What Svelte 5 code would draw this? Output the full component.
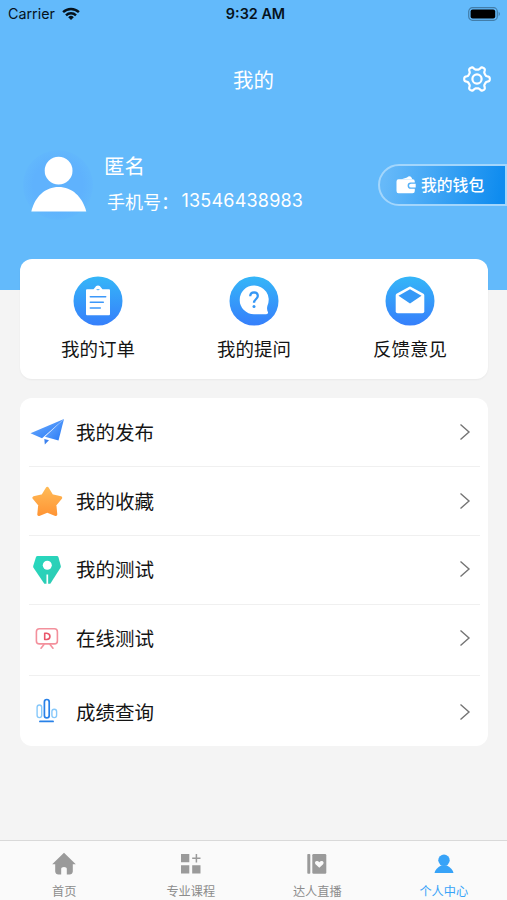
<script>
  // Six-lobed outline of the settings gear
  const gear = Array.from({ length: 120 }, (_, i) => {
    const a = (i * Math.PI) / 60;
    const b = a - 0.05 * Math.sin(6 * a);
    const r = 11 + 1.8 * Math.tanh(2.1 * (Math.cos(6 * a) + 0.15));
    return `${i ? 'L' : 'M'}${(15 + r * Math.cos(b)).toFixed(2)} ${(15 + r * Math.sin(b)).toFixed(2)}`;
  }).join('') + 'Z';

  const shortcuts = [
    { id: 'order', label: '我的订单' },
    { id: 'ask', label: '我的提问' },
    { id: 'mail', label: '反馈意见' }
  ];
  const rows = [
    { id: 'plane', label: '我的发布' },
    { id: 'star', label: '我的收藏' },
    { id: 'pen', label: '我的测试' },
    { id: 'board', label: '在线测试' },
    { id: 'bars', label: '成绩查询' }
  ];
  const tabs = [
    { id: 'home', label: '首页' },
    { id: 'grid', label: '专业课程' },
    { id: 'book', label: '达人直播' },
    { id: 'me', label: '个人中心' }
  ];
</script>

<div class="screen">
  <header>
    <div class="status">
      <div class="carrier">
        <span>Carrier</span>
        <svg width="18" height="14" viewBox="0 0 18 14">
          <g fill="none" stroke="#06121c" stroke-width="2.4">
            <path d="M1.1 5.2a11.2 11.2 0 0 1 15.800 0" />
            <path d="M4 8.300a7.100 7.100 0 0 1 10 0" />
          </g>
          <path d="M9 13 6.200 10.200a4 4 0 0 1 5.600 0Z" fill="#06121c" />
        </svg>
      </div>
      <b>9:32 AM</b>
      <div class="power">
        <svg width="33" height="14" viewBox="0 0 33 14">
          <rect x=".7" y=".7" width="28.600" height="12.600" rx="3.800" fill="none" stroke="#427da9" stroke-width="1.200" />
          <rect x="2.600" y="2.600" width="24.600" height="8.800" rx="2" fill="#000" />
          <path d="M30.700 4.800q2.400 2.200 0 4.400Z" fill="#427da9" />
        </svg>
      </div>
    </div>

    <div class="nav">
      <h1>我的</h1>
      <svg class="gear" width="30" height="30" viewBox="0 0 30 30" fill="none" stroke="#fff" stroke-width="2.200" stroke-linejoin="round">
        <path d={gear} />
        <circle cx="15" cy="15" r="4.600" />
      </svg>
    </div>

    <div class="profile">
      <div class="avatar">
        <svg width="70" height="70" viewBox="0 0 70 70" fill="#fff">
          <circle cx="35.600" cy="20.700" r="13.900" />
          <path d="M8.300 61.500C11.800 46.500 22.300 37 35.600 37S59.300 46.500 63.300 61.500Z" />
        </svg>
      </div>
      <div class="who">
        <div class="name">匿名</div>
        <div class="phone"><span>手机号：</span><span class="num">13546438983</span></div>
      </div>
      <div class="wallet">
        <svg width="21" height="20" viewBox="0 0 21 20" fill="#fff">
          <path d="M5.500 4.200 11 2.600Q13.500 .2 15.300 2.300L16.300 4.200Z" />
          <path d="M2.500 4.200H16.500Q18.800 4.200 18.800 6.500V7.600H14.700a3.100 3.100 0 0 0 0 6.200H18.800V16Q18.800 18.300 16.500 18.300H2.500Q.5 18.300 .5 16V6.500Q.5 4.200 2.500 4.200Z" />
          <path d="M15 8.800H19.700V12.600H15a1.900 1.900 0 0 1 0-3.800Z" />
        </svg>
        <span>我的钱包</span>
      </div>
    </div>
  </header>

  <section class="shortcuts">
    {#each shortcuts as s}
      <div class="shortcut">
        <svg width="50" height="50" viewBox="0 0 50 50">
          <defs>
            <linearGradient id="disc-{s.id}" x1="0" y1="0" x2="0" y2="1">
              <stop offset="0" stop-color="#35b6f8" />
              <stop offset="1" stop-color="#367ffb" />
            </linearGradient>
          </defs>
          <circle cx="25" cy="25" r="24.500" fill="url(#disc-{s.id})" />
          {#if s.id === 'order'}
            <path d="M14 13.300H20.500L22 11.500a3.200 3.200 0 0 1 6 0L29.500 13.300H36Q37 13.300 37 14.300V38Q37 39.300 36 39.300H14Q13 39.300 13 38V14.300Q13 13.300 14 13.300Z" fill="#fff" />
            <path d="M23.200 13.200a2 1.900 0 0 0 3.600 0Z" fill="#3aa5fa" />
            <path d="M17.300 20.700H32.700M17.300 26.300H30.300M17.300 32H27.300" stroke="#3c98fa" stroke-width="1.500" stroke-linecap="round" />
          {:else if s.id === 'ask'}
            <path d="M25 9.600A14.200 14.200 0 0 1 38.500 29.500Q37.400 33.500 39 36.300Q39.400 38.300 37 38.200H25A14.300 14.300 0 0 1 25 9.600Z" fill="#fff" />
            <path d="M21.200 20.300q.2-3.900 3.900-3.900 3.700.1 3.700 3.700c0 2.700-3.800 3.200-3.800 6.700" fill="none" stroke="#3597f5" stroke-width="2.300" />
            <circle cx="25" cy="30.400" r="1.500" fill="#3597f5" />
          {:else}
            <path d="M11.500 17.800 23.800 10.900Q25 10.300 26.200 10.900L38.500 17.800Q39.300 18.400 39.300 19.500V35.200Q39.300 37.200 37.300 37.200H12.700Q10.700 37.200 10.700 35.200V19.500Q10.700 18.400 11.500 17.800Z" fill="#fff" />
            <path d="M25 13.300 36.500 19.700 25 27.400 13.500 19.700Z" fill="#3699f7" />
          {/if}
        </svg>
        <span>{s.label}</span>
      </div>
    {/each}
  </section>

  <section class="list">
    {#each rows as r}
      <div class="row {r.id}">
        <svg class="pic" width="36" height="36" viewBox="0 0 36 36">
          {#if r.id === 'plane'}
            <defs>
              <linearGradient id="plane" x1="0" y1="0" x2="1" y2="1">
                <stop offset="0" stop-color="#75b2ff" /><stop offset="1" stop-color="#2376f5" />
              </linearGradient>
            </defs>
            <path d="M1.500 19.300 35 5 13 24.300Z" fill="url(#plane)" />
            <path d="M35 5 29.500 26.500 16 22.700Z" fill="url(#plane)" />
            <path d="M15.300 25 20 26.300 15.800 30.500Z" fill="#3c82ef" />
          {:else if r.id === 'star'}
            <defs>
              <linearGradient id="star" x1="0" y1="0" x2="0" y2="1">
                <stop offset="0" stop-color="#ffb955" /><stop offset="1" stop-color="#ff9636" />
              </linearGradient>
            </defs>
            <path d="M18.300 5.300 22.900 12.700 31.700 14.800 25.900 21.900 26.800 31.500 18.300 28 9.800 31.500 10.700 21.900 4.900 14.800 13.700 12.700Z" fill="url(#star)" stroke="url(#star)" stroke-width="3" stroke-linejoin="round" />
          {:else if r.id === 'pen'}
            <defs>
              <linearGradient id="pen" x1="0" y1="0" x2="1" y2="1">
                <stop offset="0" stop-color="#27d9bf" /><stop offset="1" stop-color="#2dc9b2" />
              </linearGradient>
            </defs>
            <path d="M8.500 5H28Q29 5 29.400 5.900L31.800 15Q32 16 31.500 16.800L21.300 32.800H15.300L4.500 16.800Q4 16 4.200 15L7 6Q7.400 5 8.500 5Z" fill="url(#pen)" />
            <circle cx="18.300" cy="14.300" r="4.500" fill="#fff" />
            <path d="M18.300 23.500V33" stroke="#fff" stroke-width="1.700" />
          {:else if r.id === 'board'}
            <g fill="none" stroke="#f3909c" stroke-width="1.600" stroke-linecap="round">
              <rect x="7.400" y="8.700" width="21" height="15.200" rx="3" />
              <path d="M15 24.600 12 28.200M21 24.600 24 28.200" />
              <path d="M15.700 13.300V19.500H17.700C22 19 22 13.800 17.700 13.300Z" stroke="#e9566a" stroke-width="1.600" stroke-linejoin="round" />
            </g>
          {:else}
            <g fill="none">
              <rect x="8.100" y="11" width="4.600" height="12.600" rx="2.300" stroke="#86c8fa" stroke-width="1.400" />
              <rect x="15.400" y="5.500" width="4.800" height="18.300" rx="2.400" stroke="#2881e8" stroke-width="1.700" />
              <rect x="22.900" y="15.300" width="4.700" height="8.300" rx="2.300" stroke="#86c8fa" stroke-width="1.400" />
              <path d="M11 27.400H24" stroke="#2881e8" stroke-width="1.900" stroke-linecap="round" />
            </g>
          {/if}
        </svg>
        <span>{r.label}</span>
        <svg class="chev" width="12" height="18" viewBox="0 0 12 18" fill="none" stroke="#747474" stroke-width="1.400">
          <path d="M1.500 1.500 10 9 1.500 16.500" />
        </svg>
      </div>
    {/each}
  </section>

  <nav class="tabs">
    {#each tabs as t}
      <div class="tab" class:active={t.id === 'me'}>
        <svg width="26" height="24" viewBox="0 0 26 24" fill="currentColor">
          {#if t.id === 'home'}
            <path d="M13 .8 24.800 12.300H21.800V19.500Q21.500 22.500 18.500 22.500H15.800V16.500Q15.800 15 13 15T10.200 16.500V22.500H7.500Q4.500 22.500 4.200 19.500V12.300H1.200Z" />
          {:else if t.id === 'grid'}
            <path d="M3 2H11.300V10.300H3ZM3 13.300H11.300V21.500H3ZM14.200 13.300H22.500V21.500H14.200Z" />
            <path d="M18.400 2V10.500M14.200 6.300H22.500" stroke="currentColor" stroke-width="1.500" />
          {:else if t.id === 'book'}
            <rect x="3.300" y="2" width="3" height="19.700" rx=".8" />
            <rect x="8.300" y="2" width="14" height="19.700" rx="1.300" />
            <path d="M15.300 15.800 11.500 12.300Q10.200 10.600 11.700 9.300 13.700 8.200 15.300 10.300 16.900 8.200 18.900 9.300 20.400 10.600 19.100 12.300Z" fill="#fafafa" />
          {:else}
            <circle cx="13" cy="8.200" r="5.700" />
            <path d="M3.500 21Q4 16.800 10.500 13.300H15.500Q22 16.800 22.500 21Z" />
          {/if}
        </svg>
        <span>{t.label}</span>
      </div>
    {/each}
  </nav>
</div>

<style>
  .screen {
    width: 507px;
    height: 900px;
    overflow: hidden;
    display: flex;
    flex-direction: column;
    background: #f4f4f4;
    font-family: "Noto Sans CJK SC", sans-serif;
    color: #141414;
  }
  svg { display: block; flex: none; }
  header {
    height: 290px;
    flex: none;
    background: #63bafb;
    color: #fff;
  }
  .status {
    height: 27px;
    display: flex;
    align-items: center;
    padding: 0 6px 0 9px;
    font: 14.300px/27px Inter, sans-serif;
    color: #06121c;
  }
  .carrier { flex: 1; display: flex; align-items: center; gap: 7px; margin-right: 1px; margin-left: -1px; }
  .status b { font-weight: 600; font-size: 14.400px; }
  .power { flex: 1; display: flex; justify-content: flex-end; margin-left: -1px; }
  .nav {
    height: 103px;
    display: grid;
    grid-template-columns: 1fr auto 1fr;
    align-items: center;
    padding: 0 15px;
  }
  h1 { grid-column: 2; margin: 0; font-size: 20.500px; font-weight: 400; line-height: 30px; }
  .gear { justify-self: end; }
  .profile { display: flex; height: 106px; align-items: center; padding-left: 23px; }
  .avatar {
    width: 70px;
    height: 70px;
    margin-top: 4px;
    border-radius: 50%;
    background: radial-gradient(circle, #5fb2fd 50%, #62b8fc 72%);
  }
  .who { margin: 0 0 0 11px; width: 274px; }
  .name { font-size: 20.500px; line-height: 36px; }
  .phone { display: flex; align-items: center; font-size: 18px; line-height: 36px; padding-left: 3px; }
  .num { font-family: Inter, sans-serif; font-size: 18px; letter-spacing: .2px; margin-left: 2.500px; }
  .wallet {
    flex: 1;
    box-sizing: border-box;
    height: 42px;
    border: 2px solid #a3d6fc;
    border-radius: 21px 0 0 21px;
    background: linear-gradient(100deg, #66b9f9 5%, #0f8cef 95%);
    display: flex;
    align-items: center;
    gap: 4px;
    padding-left: 16px;
    font-size: 15.800px;
    line-height: 24px;
    font-weight: 500;
    white-space: nowrap;
    margin-top: 4px;
  }
  .shortcuts {
    height: 120px;
    flex: none;
    box-sizing: border-box;
    margin: -31px 19px 0 20px;
    background: #fff;
    border-radius: 12px;
    box-shadow: 0 1px 2px #0000000c;
    display: flex;
    position: relative;
    padding-top: 17px;
  }
  .shortcut {
    flex: 1;
    display: flex;
    flex-direction: column;
    align-items: center;
    font-size: 18.500px;
    line-height: 28px;
    gap: 8px;
  }
  .list {
    margin: 19px 19px 0 20px;
    height: 348px;
    box-sizing: border-box;
    padding: 0 8px 0 9px;
    background: #fff;
    border-radius: 12px;
    flex: none;
  }
  .row {
    height: 69px;
    box-sizing: border-box;
    display: flex;
    align-items: center;
    font-size: 19.500px;
    line-height: 30px;
    border-bottom: 1px solid #f0f0f0;
    padding-right: 9px;
  }
  .row.pen { padding-bottom: 2px; }
  .row.board { height: 71px; padding-bottom: 5px; }
  .row.bars { height: 70px; border: 0; padding-top: 2px; }
  .row span { margin-left: 11px; }
  .chev { margin-left: auto; }
  .tabs {
    margin-top: auto;
    height: 60px;
    flex: none;
    box-sizing: border-box;
    border-top: 1px solid #d9d9d9;
    background: #fafafa;
    display: flex;
    padding: 11px 0 0 1px;
  }
  .tab {
    flex: 1;
    display: flex;
    flex-direction: column;
    align-items: center;
    font-size: 12.200px;
    line-height: 18px;
    gap: 6px;
    color: #8c8c8c;
  }
  .tab svg { color: #9a9a9a; }
  .active, .active svg { color: #37a3f8; }
</style>
